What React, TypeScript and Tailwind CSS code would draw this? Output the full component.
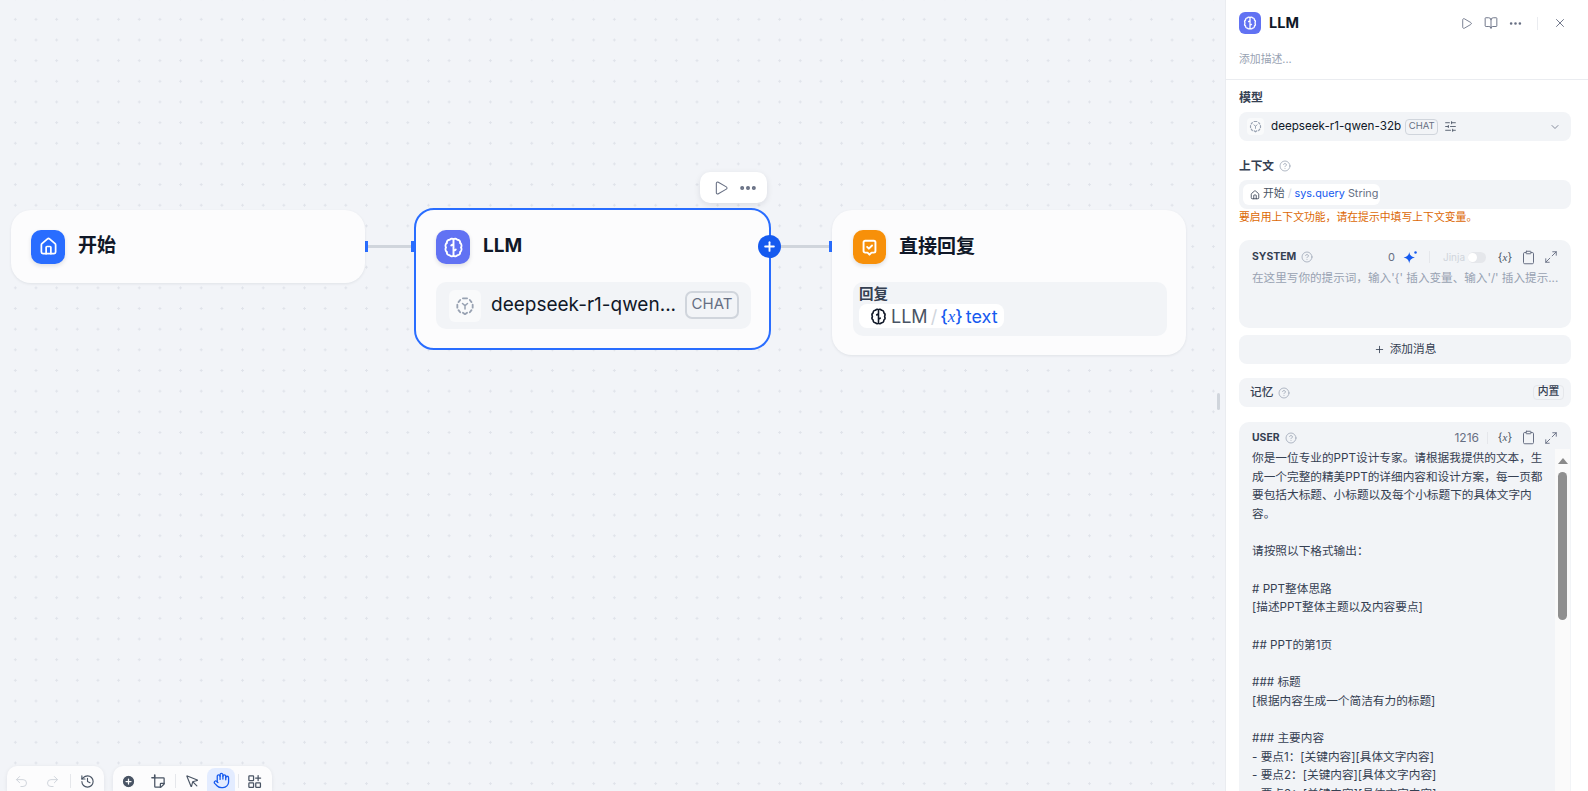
import { Clipboard, ChevronDown, CircleHelp, Ellipsis, Hand, History, House, Maximize2, MousePointer, Play, Plus, Redo2, SlidersHorizontal, Undo2, X, BookOpen, CirclePlus } from 'lucide-react';

const promptLines = [
  '你是一位专业的PPT设计专家。请根据我提供的文本，生',
  '成一个完整的精美PPT的详细内容和设计方案，每一页都',
  '要包括大标题、小标题以及每个小标题下的具体文字内',
  '容。',
  '',
  '请按照以下格式输出：',
  '',
  '# PPT整体思路',
  '[描述PPT整体主题以及内容要点]',
  '',
  '## PPT的第1页',
  '',
  '### 标题',
  '[根据内容生成一个简洁有力的标题]',
  '',
  '### 主要内容',
  '- 要点1：[关键内容][具体文字内容]',
  '- 要点2：[关键内容][具体文字内容]',
  '- 要点3：[关键内容][具体文字内容]',
];

function BrainIcon({ className }: { className?: string }) {
  return (
    <svg viewBox="0 0 24 24" fill="none" stroke="currentColor" strokeWidth="2.2" strokeLinecap="round" strokeLinejoin="round" className={className}>
      <path d="M12 2.500c-1.200-1-3.400-.8-4.300.7-2-.1-3.600 1.500-3.200 3.500C3 7.700 2.400 10.200 3.400 12c-1 1.800-.4 4.300 1.100 5.300-.4 2 1.200 3.600 3.200 3.500.9 1.500 3.100 1.700 4.300.7 1.200 1 3.400.8 4.300-.7 2 .1 3.600-1.500 3.200-3.500 1.500-1 2.100-3.500 1.100-5.300 1-1.800.4-4.300-1.100-5.300.4-2-1.200-3.600-3.200-3.500-.9-1.500-3.100-1.700-4.300-.7z" />
      <path d="M12 2.500v19M12 8.500c-.8 0-1.800.4-2.500 1.200M12 15.500c.8 0 1.800-.4 2.500-1.200" />
    </svg>
  );
}

function ModelIcon({ className }: { className?: string }) {
  return (
    <svg viewBox="0 0 24 24" fill="none" stroke="currentColor" strokeWidth="2.2" strokeLinecap="round" strokeLinejoin="round" className={className}>
      <path d="M9.500 2.800h5M17.800 4.800l2 2.500M21.200 10.500v3.500M19.800 17l-2 2.500M9.500 20l2.500 1.800 2.500-1.800M6.200 19.500l-2-2.500M2.800 14v-3.500M4.200 7.300l2-2.500" />
      <path d="M9 9l3 2.500L15 9M12 11.500V15.500" strokeWidth="1.800" />
    </svg>
  );
}

function AnswerIcon({ className }: { className?: string }) {
  return (
    <svg viewBox="0 0 24 24" fill="none" stroke="currentColor" strokeWidth="2.400" strokeLinecap="round" strokeLinejoin="round" className={className}>
      <path d="M6.500 3.500h11a2 2 0 0 1 2 2v11a2 2 0 0 1-2 2h-3L12 21l-2.500-2.500h-3a2 2 0 0 1-2-2v-11a2 2 0 0 1 2-2z" />
      <path d="M9 11.300l2.200 2.200 4-4" />
    </svg>
  );
}

function NoteCropIcon({ className }: { className?: string }) {
  return (
    <svg viewBox="0 0 24 24" fill="none" stroke="currentColor" strokeWidth="2" strokeLinecap="round" strokeLinejoin="round" className={className}>
      <path d="M6 6h14a1 1 0 0 1 1 1v9l-5 5H7a1 1 0 0 1-1-1V6z" />
      <path d="M21 15h-5a1 1 0 0 0-1 1v5" />
      <path d="M6 1.500V6M1.500 6H6" strokeWidth="2.600" />
    </svg>
  );
}

function GridPlusIcon({ className }: { className?: string }) {
  return (
    <svg viewBox="0 0 24 24" fill="none" stroke="currentColor" strokeWidth="2" strokeLinecap="round" strokeLinejoin="round" className={className}>
      <rect x="3" y="3" width="7.500" height="7.500" rx="1" />
      <rect x="3" y="14" width="7.500" height="7.500" rx="1" />
      <rect x="14" y="14" width="7.500" height="7.500" rx="1" />
      <path d="M17.800 2.500v8M13.800 6.500h8" />
    </svg>
  );
}

function Sparkle() {
  return (
    <svg viewBox="0 0 24 24" className="h-[15px] w-[15px] text-[#155aef]" fill="currentColor">
      <path d="M10 3c.8 5 3 7.400 9 9-6 1.500-8.200 4-9 9.500C9.200 16 7 13.500 1 12c6-1.600 8.200-4 9-9z" />
      <circle cx="20" cy="4" r="2" />
    </svg>
  );
}

function VarIcon({ className }: { className?: string }) {
  return (
    <span className={`whitespace-nowrap ${className ?? ''}`}>
      {'{'}<i className="font-['Liberation_Serif',serif]">x</i>{'}'}
    </span>
  );
}

function Edge({ left, width }: { left: string; width: string }) {
  return <div className={`absolute top-[245px] h-[3px] bg-[#d0d5dc] ${left} ${width}`} />;
}

function EditorTools() {
  return (
    <div className="flex items-center gap-[8px] text-[#676f83]">
      <VarIcon className="w-[16px] text-center text-[11px] text-[#495464]" />
      <Clipboard className="h-[15px] w-[15px]" strokeWidth={1.6} />
      <Maximize2 className="h-[14px] w-[14px]" strokeWidth={1.6} />
    </div>
  );
}

export default function App() {
  return (
    <div className="flex h-[791px] w-[1588px] overflow-hidden bg-[#f2f4f8] font-['Inter','Noto_Sans_CJK_SC',sans-serif] text-[#101828]">
      {/* canvas */}
      <div className="relative flex-1 bg-[radial-gradient(circle,#e0e3ea_1px,transparent_1.2px)] bg-[size:20.67px_20.67px] bg-[position:5px_9px]">
        <Edge left="left-[365px]" width="w-[49px]" />
        <Edge left="left-[771px]" width="w-[61px]" />
        <div className="absolute left-[365px] top-[241px] h-[11px] w-[3px] bg-[#296dff]" />
        <div className="absolute left-[411px] top-[241px] h-[11px] w-[3px] bg-[#296dff]" />
        <div className="absolute left-[829px] top-[241px] h-[11px] w-[3px] bg-[#296dff]" />

        {/* start node */}
        <div className="absolute left-[11px] top-[210px] flex h-[73px] w-[354px] items-center gap-[13px] rounded-[20px] bg-[#fcfcfd] pl-[20px] shadow-[0_1px_3px_rgba(16,24,40,0.08)]">
          <div className="flex h-[34px] w-[34px] items-center justify-center rounded-[10px] bg-[#296dff] shadow-[0_2px_4px_rgba(16,24,40,0.12)]">
            <House className="h-[19px] w-[19px] text-white" strokeWidth={2.2} />
          </div>
          <span className="text-[19px] font-bold">开始</span>
        </div>

        {/* llm node */}
        <div className="absolute left-[414px] top-[208px] h-[142px] w-[357px] rounded-[20px] border-2 border-[#296dff] bg-[#fcfcfd] px-[20px] pt-[20px]">
          <div className="flex items-center gap-[13px]">
            <div className="flex h-[34px] w-[34px] items-center justify-center rounded-[10px] bg-[#6172f3] shadow-[0_2px_4px_rgba(16,24,40,0.12)]">
              <BrainIcon className="h-[21px] w-[21px] text-white" />
            </div>
            <span className="-mt-[2px] text-[19px] font-bold">LLM</span>
          </div>
          <div className="mt-[18px] flex h-[47px] w-[315px] items-center rounded-[10px] bg-[#f2f4f7] pl-[13px]">
            <div className="flex h-[32px] w-[32px] items-center justify-center rounded-[6px] bg-[#f9fafb]">
              <ModelIcon className="h-[20px] w-[20px] text-[#98a2b2]" />
            </div>
            <span className="ml-[10px] w-[194px] text-[19px] whitespace-nowrap">deepseek-r1-qwen...</span>
            <span className="-mt-[2px] flex h-[28px] w-[54px] items-center justify-center rounded-[7px] border-2 border-[#d0d5dc] text-[15px] text-[#676f83]">CHAT</span>
          </div>
        </div>

        <div className="absolute left-[758px] top-[235px] flex h-[23px] w-[23px] items-center justify-center rounded-full bg-[#155aef]">
          <Plus className="h-[15px] w-[15px] text-white" strokeWidth={3} />
        </div>

        <div className="absolute left-[700px] top-[172px] flex h-[31px] w-[67px] items-center gap-[9px] rounded-[10px] bg-white pl-[13px] shadow-[0_2px_6px_rgba(16,24,40,0.1)]">
          <Play className="h-[16px] w-[16px] text-[#676f83]" strokeWidth={1.6} />
          <Ellipsis className="h-[20px] w-[20px] text-[#676f83]" strokeWidth={2.8} />
        </div>

        {/* answer node */}
        <div className="absolute left-[832px] top-[210px] h-[145px] w-[354px] rounded-[20px] bg-[#fcfcfd] px-[21px] pt-[20px] shadow-[0_1px_3px_rgba(16,24,40,0.08)]">
          <div className="flex items-center gap-[13px]">
            <div className="flex h-[34px] w-[33px] items-center justify-center rounded-[10px] bg-[#f79009] shadow-[0_2px_4px_rgba(16,24,40,0.12)]">
              <AnswerIcon className="h-[19px] w-[19px] text-white" />
            </div>
            <span className="text-[19px] font-bold">直接回复</span>
          </div>
          <div className="mt-[18px] h-[54px] w-[314px] rounded-[10px] bg-[#f2f4f7] px-[6px] pt-[5px]">
            <div className="text-[14.5px] leading-[14px] font-semibold text-[#354052]">回复</div>
            <div className="mt-[3px] flex h-[24px] w-[145px] items-center rounded-[8px] bg-white pl-[11px] pt-[1px] text-[18px] leading-none">
              <BrainIcon className="h-[17px] w-[17px] text-[#101828]" />
              <span className="ml-[4px] text-[#495464]">LLM</span>
              <span className="mx-[3px] text-[#d0d5dc]">/</span>
              <VarIcon className="text-[17px] font-medium text-[#155aef]" />
              <span className="ml-[3px] text-[#155aef]">text</span>
            </div>
          </div>
        </div>

        {/* bottom toolbars */}
        <div className="absolute bottom-0 left-[7px] flex h-[25px] w-[97px] items-start rounded-t-[10px] bg-[#fcfcfd] pl-[7px] pt-[8px] shadow-[0_1px_4px_rgba(16,24,40,0.08)]">
          <Undo2 className="h-[15px] w-[15px] text-[#d0d5dc]" strokeWidth={1.6} />
          <Redo2 className="ml-[16px] h-[15px] w-[15px] text-[#d0d5dc]" strokeWidth={1.6} />
          <div className="ml-[10px] h-[14px] w-px bg-[#e5e7eb]" />
          <History className="ml-[9px] h-[15px] w-[15px] text-[#495464]" strokeWidth={1.8} />
        </div>
        <div className="absolute bottom-0 left-[113px] flex h-[25px] w-[159px] items-start rounded-t-[10px] bg-[#fcfcfd] pl-[8px] pt-[8px] shadow-[0_1px_4px_rgba(16,24,40,0.08)]">
          <CirclePlus className="h-[15px] w-[15px] fill-[#495464] text-white" strokeWidth={2} />
          <NoteCropIcon className="ml-[15px] h-[15px] w-[15px] text-[#495464]" />
          <div className="ml-[9px] h-[14px] w-px bg-[#e5e7eb]" />
          <MousePointer className="ml-[9px] h-[15px] w-[15px] text-[#495464]" strokeWidth={1.8} />
          <div className="-mt-[6px] ml-[7px] flex h-[23px] w-[28px] items-start justify-center rounded-t-[8px] bg-[#e3ecff] pt-[4px]">
            <Hand className="h-[17px] w-[17px] text-[#155aef]" strokeWidth={1.8} />
          </div>
          <div className="ml-[3px] h-[14px] w-px bg-[#e5e7eb]" />
          <GridPlusIcon className="ml-[8px] h-[15px] w-[15px] text-[#495464]" />
        </div>

        <div className="absolute left-[1217px] top-[393px] h-[17px] w-[3px] rounded-sm bg-[#d0d5dc]" />
      </div>

      {/* side panel */}
      <div className="flex h-full w-[363px] shrink-0 flex-col overflow-hidden border-l border-[#eaecf0] bg-white">
        <div className="border-b border-[#eaecf0] pb-[11px] pl-[13px] pr-[21px] pt-[12px]">
          <div className="flex h-[22px] items-center">
            <div className="flex h-[22px] w-[22px] items-center justify-center rounded-[6px] bg-[#6172f3]">
              <BrainIcon className="h-[14px] w-[14px] text-white" />
            </div>
            <span className="ml-[8px] text-[14.5px] font-bold">LLM</span>
            <Play className="ml-auto h-[13px] w-[13px] text-[#676f83]" strokeWidth={1.6} />
            <BookOpen className="ml-[11px] h-[14px] w-[14px] text-[#676f83]" strokeWidth={1.6} />
            <Ellipsis className="ml-[10px] h-[15px] w-[15px] text-[#676f83]" strokeWidth={2.2} />
            <div className="ml-[14px] h-[13px] w-px bg-[#eaecf0]" />
            <X className="ml-[15px] h-[14px] w-[14px] text-[#676f83]" strokeWidth={1.6} />
          </div>
          <div className="mt-[18px] text-[10.83px] leading-[16px] text-[#98a2b2]">添加描述...</div>
        </div>

        <div className="flex flex-col pl-[13px] pr-[17px]">
          <div className="mt-[10px] text-[12px] leading-[16px] font-semibold text-[#354052]">模型</div>
          <div className="mt-[6px] flex h-[29px] items-center rounded-[8px] bg-[#f2f4f7] pl-[8px] pr-[10px]">
            <div className="flex h-[17px] w-[17px] items-center justify-center rounded-[4px] bg-[#f9fafb]">
              <ModelIcon className="h-[13px] w-[13px] text-[#98a2b2]" />
            </div>
            <span className="ml-[7px] text-[11.67px]">deepseek-r1-qwen-32b</span>
            <span className="ml-[4px] flex h-[16px] w-[33px] items-center justify-center rounded-[4px] border border-[#d0d5dc] text-[9.5px] text-[#676f83]">CHAT</span>
            <SlidersHorizontal className="ml-[6px] h-[13px] w-[13px] text-[#495464]" strokeWidth={1.6} />
            <ChevronDown className="ml-auto h-[12px] w-[12px] text-[#676f83]" strokeWidth={1.6} />
          </div>

          <div className="mt-[17px] flex items-center gap-[5px] text-[11.67px] leading-[16px] font-semibold text-[#354052]">
            上下文
            <CircleHelp className="h-[12px] w-[12px] text-[#98a2b2]" strokeWidth={1.5} />
          </div>
          <div className="mt-[6px] flex h-[29px] items-center rounded-[8px] bg-[#f2f4f7] pl-[4px]">
            <div className="flex h-[21px] w-[137px] items-center rounded-[6px] bg-white pl-[7px] text-[10.83px] leading-none">
              <House className="mr-[3px] h-[10px] w-[10px] text-[#354052]" strokeWidth={2} />
              <span className="text-[#495464]">开始</span>
              <span className="mx-[3px] text-[#d0d5dc]">/</span>
              <span className="text-[#155aef]">sys.query</span>
              <span className="ml-[3px] text-[#676f83]">String</span>
            </div>
          </div>
          <div className="pt-px text-[10.83px] leading-[16px] text-[#dc6803]">要启用上下文功能，请在提示中填写上下文变量。</div>

          {/* system prompt */}
          <div className="mt-[14px] h-[88px] rounded-[10px] bg-[#f2f4f7] px-[13px] pt-[10px]">
            <div className="flex h-[14px] items-center">
              <span className="text-[10.4px] font-bold text-[#354052]">SYSTEM</span>
              <CircleHelp className="ml-[5px] h-[12px] w-[12px] text-[#98a2b2]" strokeWidth={1.5} />
              <span className="ml-auto text-[11px] text-[#676f83]">0</span>
              <span className="ml-[8px]"><Sparkle /></span>
              <div className="ml-[11px] h-[12px] w-px bg-[#e5e7eb]" />
              <span className="ml-[13px] text-[10px] text-[#d0d5dc]">Jinja</span>
              <div className="relative ml-[3px] mr-[11px] h-[11px] w-[18px] rounded-full bg-[#e5e7eb]">
                <div className="absolute left-0 top-[1px] h-[9px] w-[9px] rounded-full bg-white" />
              </div>
              <EditorTools />
            </div>
            <div className="mt-[5px] overflow-hidden text-[11.6px] leading-[18px] whitespace-nowrap text-[#98a2b2]">
              在这里写你的提示词，输入'{'{'}' 插入变量、输入'/' 插入提示...
            </div>
          </div>

          <div className="mt-[7px] flex h-[29px] items-center justify-center gap-[5px] rounded-[8px] bg-[#f2f4f7] text-[11.67px] text-[#354052]">
            <Plus className="h-[11px] w-[11px]" strokeWidth={1.8} />
            添加消息
          </div>

          <div className="mt-[14px] flex h-[29px] items-center rounded-[8px] bg-[#f2f4f7] pl-[11px] pr-[7px] text-[11.67px] font-medium text-[#354052]">
            记忆
            <CircleHelp className="ml-[5px] h-[12px] w-[12px] text-[#98a2b2]" strokeWidth={1.5} />
            <span className="ml-auto flex h-[15px] w-[31px] items-center justify-center rounded-[4px] border border-[#e5e7eb] text-[10.83px]">内置</span>
          </div>

          {/* user prompt */}
          <div className="mt-[15px] flex h-[400px] flex-col rounded-t-[10px] bg-[#f2f4f7]">
            <div className="flex h-[27px] shrink-0 items-center px-[13px] pt-[4px]">
              <span className="text-[10.4px] font-bold text-[#354052]">USER</span>
              <CircleHelp className="ml-[5px] h-[12px] w-[12px] text-[#98a2b2]" strokeWidth={1.5} />
              <span className="ml-auto text-[12px] text-[#676f83]">1216</span>
              <div className="ml-[8px] mr-[9px] h-[12px] w-px bg-[#e5e7eb]" />
              <EditorTools />
            </div>
            <div className="flex min-h-0 flex-1">
              <div className="flex-1 overflow-hidden pl-[13px] text-[11.67px] leading-[18.67px] text-[#354052]">
                {promptLines.map((line, i) => (
                  <div key={i} className="h-[18.67px] whitespace-nowrap">{line}</div>
                ))}
              </div>
              <div className="mr-px flex w-[15px] shrink-0 flex-col items-center bg-[#fafafa] pt-[9px]">
                <div className="h-0 w-0 border-x-[5px] border-b-[6px] border-x-transparent border-b-[#8a8a8a]" />
                <div className="mt-[8px] h-[148px] w-[9px] rounded-full bg-[#8f8f8f]" />
              </div>
            </div>
          </div>
        </div>
      </div>
    </div>
  );
}
